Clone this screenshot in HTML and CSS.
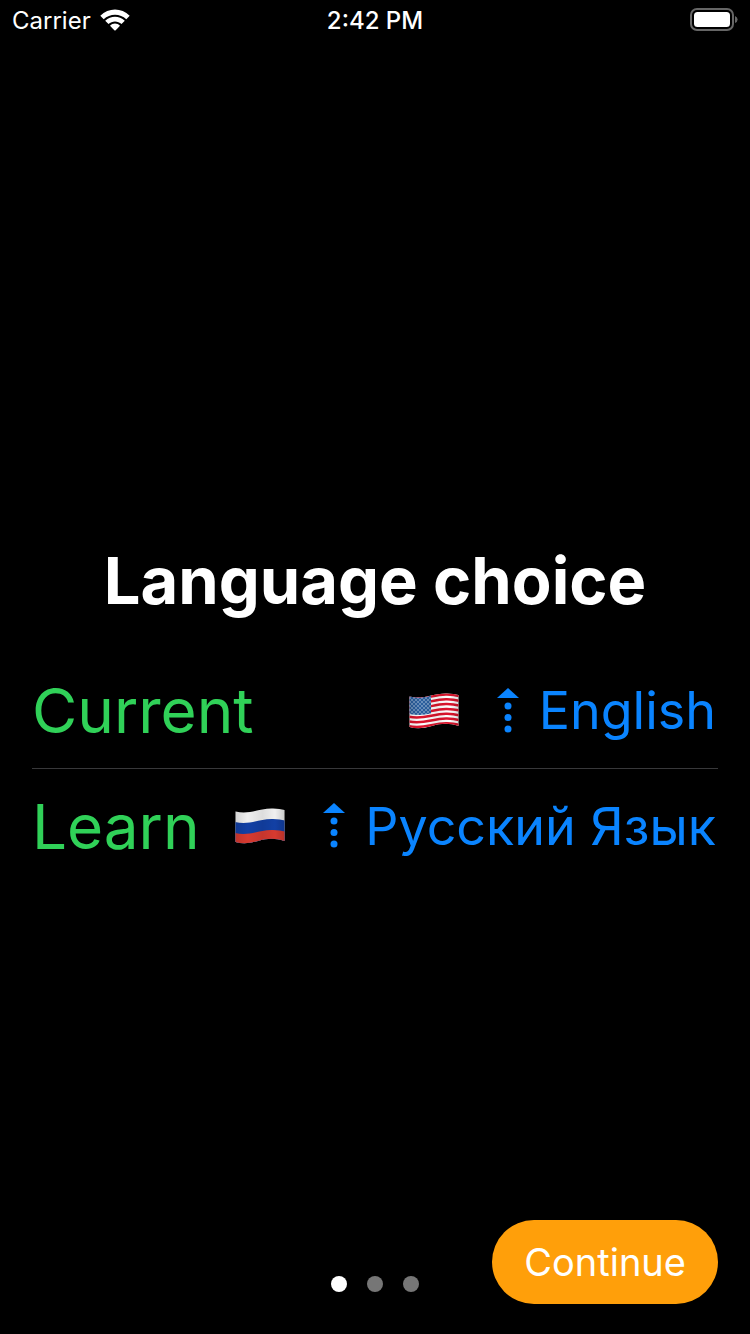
FILE: index.html
```html
<!DOCTYPE html>
<html lang="en">
<head>
<meta charset="utf-8">
<meta name="viewport" content="width=device-width, initial-scale=1">
<title>Language choice</title>
<link rel="stylesheet" href="styles.css">
</head>
<body>
<div class="screen">
  <header class="status">
    <div class="carrier">
      <span>Carrier</span>
      <svg class="wifi" viewBox="0 0 30 22" aria-hidden="true">
        <path d="M0.3 6.8C8.600-1.600 21.400-1.600 29.700 6.800L26.300 10.200C20.200 4.200 9.800 4.200 3.700 10.200Z"/>
        <path d="M5.200 11.800C10.700 6.400 19.300 6.400 24.800 11.800L21.500 15.100C17.800 11.500 12.200 11.500 8.500 15.100Z"/>
        <path d="M10 16.700C12.800 13.900 17.200 13.900 20 16.700L15.700 21.200Q15 21.900 14.300 21.200Z"/>
      </svg>
    </div>
    <time class="clock">2:42 PM</time>
    <svg class="battery" viewBox="0 0 48 24" aria-hidden="true">
      <rect class="battery-case" x="1" y="1" width="42" height="21" rx="6"/>
      <rect x="4" y="4" width="36" height="15" rx="3.5"/>
      <path class="battery-tip" d="M45 8Q47.6 9 47.6 11.5Q47.6 14 45 15Z"/>
    </svg>
  </header>

  <main class="content">
    <h1 class="title">Language choice</h1>
    <div class="row">
      <span class="label" id="current">Current</span>
      <button class="picker" type="button" aria-describedby="current">
        <svg class="flag" viewBox="0 0 50 36" aria-hidden="true">
          <defs>
            <clipPath id="wave"><path d="M0.5 3.5C15 7 24 0 38 0.5Q45 0.7 49.5 2V33C40 29.500 31 30.500 23 33Q10 37 0.5 34Z"/></clipPath>
            <linearGradient id="shade">
              <stop offset="0" stop-color="#000" stop-opacity=".12"/>
              <stop offset=".25" stop-color="#000" stop-opacity="0"/>
              <stop offset=".55" stop-color="#000" stop-opacity=".08"/>
              <stop offset=".8" stop-color="#000" stop-opacity="0"/>
              <stop offset="1" stop-color="#000" stop-opacity=".16"/>
            </linearGradient>
            <pattern id="stars" width="4" height="4" patternUnits="userSpaceOnUse">
              <rect width="4" height="4" fill="#2b5f9e"/>
              <circle cx="1" cy="1" r=".75" fill="#c5d8ea"/>
              <circle cx="3" cy="3" r=".75" fill="#c5d8ea"/>
            </pattern>
          </defs>
          <g clip-path="url(#wave)">
            <rect width="50" height="36" fill="#fff"/>
            <g fill="none" stroke="#dc142c" stroke-width="2.500">
              <path d="M0 4.500C15 8 24 1 38 1.500Q45 1.700 50 3"/>
              <path d="M0 9.300C15 12.800 24 5.800 38 6.300Q45 6.500 50 7.800"/>
              <path d="M0 14.100C15 17.600 24 10.600 38 11.100Q45 11.300 50 12.600"/>
              <path d="M0 18.900C15 22.400 24 15.400 38 15.900Q45 16.100 50 17.400"/>
              <path d="M0 23.700C15 27.200 24 20.200 38 20.700Q45 20.900 50 22.200"/>
              <path d="M0 28.500C15 32 24 25 38 25.500Q45 25.700 50 27"/>
              <path d="M0 33.300C15 36.800 24 29.800 38 30.300Q45 30.500 50 31.800"/>
            </g>
            <path d="M0 3Q12 6 22 2.500V20.500Q12 23 0 21Z" fill="url(#stars)"/>
            <rect width="50" height="36" fill="url(#shade)"/>
          </g>
        </svg>
        <svg class="arrow" viewBox="0 0 22 46" aria-hidden="true">
          <path d="M11 0L22 10H0Z"/><circle cx="11" cy="18" r="3.500"/><circle cx="11" cy="29.500" r="3.500"/><circle cx="11" cy="41" r="3.500"/>
        </svg>
        <span>English</span>
      </button>
    </div>
    <div class="row">
      <span class="label" id="learn">Learn</span>
      <button class="picker" type="button" aria-describedby="learn">
        <svg class="flag" viewBox="0 0 50 36" aria-hidden="true">
          <g clip-path="url(#wave)">
            <rect width="50" height="36" fill="#f0f0f0"/>
            <path d="M0 14C15 17.500 24 10.500 38 11Q45 11.200 50 12.500V36H0Z" fill="#1240a5"/>
            <path d="M0 25C15 28.500 24 21.500 38 22Q45 22.200 50 23.500V36H0Z" fill="#d73a30"/>
            <rect width="50" height="36" fill="url(#shade)"/>
          </g>
        </svg>
        <svg class="arrow" viewBox="0 0 22 46" aria-hidden="true">
          <path d="M11 0L22 10H0Z"/><circle cx="11" cy="18" r="3.500"/><circle cx="11" cy="29.500" r="3.500"/><circle cx="11" cy="41" r="3.500"/>
        </svg>
        <span lang="ru">Русский Язык</span>
      </button>
    </div>
  </main>

  <footer class="footer">
    <div class="dots" role="img" aria-label="Page 1 of 3">
      <span class="dot dot-active"></span><span class="dot"></span><span class="dot"></span>
    </div>
    <button class="continue" type="button">Continue</button>
  </footer>
</div>
</body>
</html>
```
FILE: styles.css
```css
* {
  box-sizing: border-box;
}

body {
  margin: 0;
  background: #000;
  color: #fff;
  font-family: Inter, "Liberation Sans", sans-serif;
}

button {
  border: 0;
  background: none;
  font: inherit;
  cursor: pointer;
}

.screen {
  display: flex;
  flex-direction: column;
  min-height: 100vh;
}

.status {
  display: grid;
  grid-template-columns: 1fr auto 1fr;
  align-items: center;
  height: 40px;
  padding: 0 12px;
  font-size: 24px;
}

.carrier {
  display: flex;
  align-items: center;
  gap: 9px;
}

.wifi {
  width: 30px;
  height: 22px;
  fill: #fff;
}

.clock {
  font-weight: 500;
}

.battery {
  justify-self: end;
  width: 48px;
  height: 24px;
  fill: #fff;
}

.battery-case {
  fill: none;
  stroke: #666;
  stroke-width: 2;
}

.battery-tip {
  fill: #666;
}

.content {
  display: flex;
  flex: 1;
  flex-direction: column;
  justify-content: center;
  padding: 164px 32px 0;
}

.title {
  margin: 0 0 32px;
  font-size: 65px;
  line-height: 80px;
  font-weight: 700;
  text-align: center;
}

.row {
  display: flex;
  align-items: center;
  justify-content: space-between;
  height: 115px;
}

.row + .row {
  border-top: 1px solid #38383a;
}

.label {
  color: #30d158;
  font-size: 62px;
}

.picker {
  display: flex;
  align-items: center;
  padding: 0 2px 0 0;
  color: #0a84ff;
  font-size: 52px;
  white-space: nowrap;
}

.flag {
  width: 50px;
  height: 36px;
  margin-right: 38px;
}

.arrow {
  width: 22px;
  height: 46px;
  margin-right: 20px;
  fill: #0a84ff;
}

.footer {
  display: grid;
  grid-template-columns: 1fr auto 1fr;
  align-items: end;
  padding: 0 32px 30px;
}

.dots {
  display: flex;
  grid-column: 2;
  gap: 20px;
  padding-bottom: 12px;
}

.dot {
  width: 16px;
  height: 16px;
  border-radius: 50%;
  background: #767676;
}

.dot-active {
  background: #fff;
}

.continue {
  justify-self: end;
  padding: 18px 32px;
  border-radius: 42px;
  background: #ff9f0a;
  color: #fff;
  font-size: 38px;
  line-height: 48px;
}
```
